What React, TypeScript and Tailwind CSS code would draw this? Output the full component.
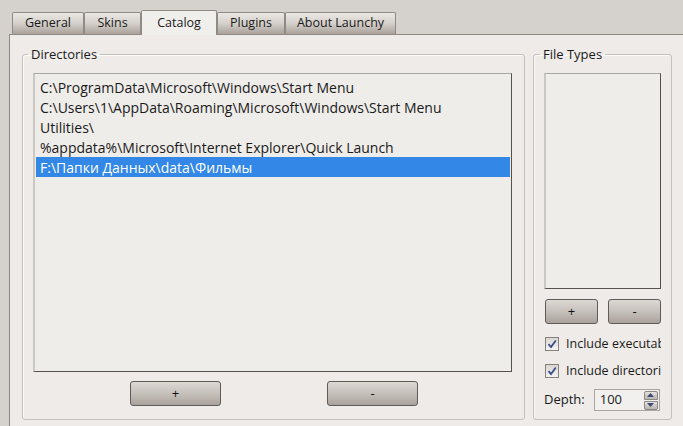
import React from "react";

const font = { fontFamily: '"Open Sans", "Noto Sans", sans-serif' };

function Tab({ label, selected, w }: { label: string; selected?: boolean; w: string }) {
  if (selected) {
    return (
      <div
        className={`${w} h-[25px] -mb-[1px] relative z-10 flex items-center justify-center border border-b-0 border-[#8e8a86] rounded-t-[2px] bg-[#f1efec] text-[12.5px] text-[#1a1a1a]`}
      >
        {label}
      </div>
    );
  }
  return (
    <div
      className={`${w} h-[22px] flex items-center justify-center border border-b-0 border-[#8e8a86] rounded-t-[2px] bg-gradient-to-b from-[#ebe8e4] via-[#d4cfca] to-[#aaa29b] text-[12.5px] text-[#1a1a1a]`}
    >
      {label}
    </div>
  );
}

function Btn({ label, w }: { label: string; w: string }) {
  return (
    <div
      className={`${w} h-[25px] flex items-center justify-center rounded-[3px] border border-[#5f5b57] bg-gradient-to-b from-[#dcd8d4] via-[#c6c0bb] to-[#a9a29c] text-[13px] text-[#111] leading-none`}
    >
      {label}
    </div>
  );
}

function Check({ label }: { label: string }) {
  return (
    <div className="flex items-center h-[14px] whitespace-nowrap overflow-hidden">
      <div className="w-[14px] h-[14px] shrink-0 border border-[#85817d] bg-gradient-to-b from-[#d9d6d3] to-[#f4f3f1] flex items-center justify-center">
        <svg width="10" height="10" viewBox="0 0 10 10">
          <path d="M1.5 5.2 L4 8 L8.8 1.5" fill="none" stroke="#3b4c8c" strokeWidth="1.8" />
        </svg>
      </div>
      <span className="ml-[7px] text-[12.5px] text-[#1a1a1a]">{label}</span>
    </div>
  );
}

const rows = [
  "C:\\ProgramData\\Microsoft\\Windows\\Start Menu",
  "C:\\Users\\1\\AppData\\Roaming\\Microsoft\\Windows\\Start Menu",
  "Utilities\\",
  "%appdata%\\Microsoft\\Internet Explorer\\Quick Launch",
  "F:\\Папки Данных\\data\\Фильмы",
];

export default function App() {
  return (
    <div className="w-[683px] h-[426px] overflow-hidden bg-[#d5d1cd] flex flex-col" style={font}>
      <div className="flex items-end pl-[12px] pt-[10px] h-[34px] shrink-0">
        <Tab label="General" w="w-[72px]" />
        <Tab label="Skins" w="w-[57px]" />
        <Tab label="Catalog" selected w="w-[76px]" />
        <Tab label="Plugins" w="w-[68px]" />
        <Tab label="About Launchy" w="w-[111px]" />
      </div>
      <div className="ml-[9px] flex-1 border-l border-t border-[#8e8a86] bg-[#eeebe8] pt-[10px] pl-[12px] flex gap-[8px]">
        <fieldset className="w-[503px] h-[375px] border border-[#c4c0bc] rounded-[3px] pl-[10px] pr-[12px] shadow-[inset_1px_1px_0_#fbfaf9]">
          <legend className="-ml-[5px] px-[3px] text-[13px] leading-[18px] text-[#1a1a1a]">Directories</legend>
          <div className="mt-[10px] h-[299px] border-t border-l-2 border-t-[#aaa6a2] border-l-[#cbc7c3] border-r border-b border-r-[#55514d] border-b-[#55514d] bg-[#efedea] pt-[3px] pl-[1px] pr-[1px]">
            {rows.map((r, i) => (
              <div
                key={i}
                className={`h-[20px] pl-[4px] flex items-center text-[14px] whitespace-nowrap ${
                  i === 4 ? "bg-[#3287e7] text-white" : "text-[#1a1a1a]"
                }`}
              >
                {r}
              </div>
            ))}
          </div>
          <div className="flex mt-[9px] ml-[97px] gap-[106px]">
            <Btn label="+" w="w-[91px]" />
            <Btn label="-" w="w-[91px]" />
          </div>
        </fieldset>
        <fieldset className="w-[138px] h-[375px] border border-[#c4c0bc] rounded-[3px] pl-[10px] pr-[10px] shadow-[inset_1px_1px_0_#fbfaf9]">
          <legend className="-ml-[4px] px-[3px] text-[13px] leading-[18px] text-[#1a1a1a]">File Types</legend>
          <div className="mt-[10px] h-[216px] border-t border-l-2 border-t-[#aaa6a2] border-l-[#cbc7c3] border-r border-b border-r-[#55514d] border-b-[#55514d] bg-[#efedea]" />
          <div className="flex mt-[10px] ml-[1px] gap-[10px]">
            <Btn label="+" w="w-[53px]" />
            <Btn label="-" w="w-[53px]" />
          </div>
          <div className="mt-[13px] ml-[1px] flex flex-col gap-[13px] w-[116px]">
            <Check label="Include executables" />
            <Check label="Include directories" />
          </div>
          <div className="mt-[11px] flex items-center">
            <span className="text-[13px] text-[#1a1a1a]">Depth:</span>
            <div className="ml-[9px] w-[66px] h-[22px] border border-[#a9a5a1] bg-[#f2f0ee] flex items-center justify-between pl-[5px] pr-[1px]">
              <span className="text-[13px] text-[#1a1a1a]">100</span>
              <div className="flex flex-col gap-[1px]">
                <div className="w-[14px] h-[9px] border border-[#8d8985] rounded-t-[2px] bg-gradient-to-b from-[#e6e3e0] to-[#b9b4af] flex items-center justify-center">
                  <svg width="7" height="4" viewBox="0 0 7 4"><path d="M0 4 L3.5 0 L7 4 Z" fill="#3d4a73" /></svg>
                </div>
                <div className="w-[14px] h-[9px] border border-[#8d8985] rounded-b-[2px] bg-gradient-to-b from-[#e6e3e0] to-[#b9b4af] flex items-center justify-center">
                  <svg width="7" height="4" viewBox="0 0 7 4"><path d="M0 0 L3.5 4 L7 0 Z" fill="#3d4a73" /></svg>
                </div>
              </div>
            </div>
          </div>
        </fieldset>
      </div>
    </div>
  );
}
